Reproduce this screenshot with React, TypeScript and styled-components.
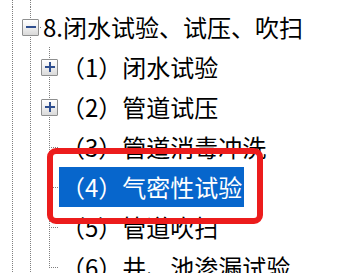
import React from "react";
import styled, { createGlobalStyle, css } from "styled-components";

const Global = createGlobalStyle`
  html, body { margin: 0; padding: 0; background: #ffffff; }
  body { width: 349px; height: 273px; overflow: hidden; }
`;

const DOT = "#7f7f7f";
const vDots = `repeating-linear-gradient(to bottom, ${DOT} 0 1px, transparent 1px 2px)`;
const hDots = `repeating-linear-gradient(to right, ${DOT} 0 1px, transparent 1px 2px)`;

type LineKind = "none" | "pass" | "tee" | "end";

const Tree = styled.div`
  position: relative;
  display: flex;
  flex-direction: column;
  font-family: "Noto Sans CJK SC", "Noto Sans", sans-serif;
  font-size: 24px;
  color: #000;
`;

const Row = styled.div<{ $h?: number }>`
  display: flex;
  align-items: stretch;
  height: ${(p) => p.$h ?? 40}px;
`;

const Guide = styled.div<{ $w: number; $x: number; $kind: LineKind }>`
  flex: none;
  width: ${(p) => p.$w}px;
  display: flex;
  align-items: center;
  background-repeat: no-repeat;
  ${(p) => {
    const x = p.$x;
    switch (p.$kind) {
      case "pass":
        return css`
          background-image: ${vDots};
          background-size: 1px 100%;
          background-position: ${x}px 0;
        `;
      case "tee":
        return css`
          background-image: ${vDots}, ${hDots};
          background-size: 1px 100%, ${p.$w - x}px 1px;
          background-position: ${x}px 0, ${x}px 50%;
        `;
      case "end":
        return css`
          background-image: ${vDots}, ${hDots};
          background-size: 1px 50%, ${p.$w - x}px 1px;
          background-position: ${x}px 0, ${x}px 50%;
        `;
      default:
        return css``;
    }
  }}
`;

const Toggle = styled.div<{ $size: number; $off: number }>`
  box-sizing: border-box;
  width: ${(p) => p.$size}px;
  height: ${(p) => p.$size}px;
  margin-left: ${(p) => p.$off}px;
  border: 1px solid #8e8f8f;
  border-radius: 1px;
  background: linear-gradient(to bottom, #ffffff 0%, #f1f1f1 45%, #d9d9d9 100%);
  display: flex;
  align-items: center;
  justify-content: center;
`;

const Label = styled.div<{ $selected?: boolean }>`
  display: flex;
  align-items: center;
  padding: 0 2px;
  white-space: nowrap;
  line-height: 40px;
  background: ${(p) => (p.$selected ? "#0766cc" : "transparent")};
  color: ${(p) => (p.$selected ? "#ffffff" : "#000000")};
`;

const Highlight = styled.div`
  position: absolute;
  left: 47px;
  top: 148px;
  width: 216px;
  height: 76px;
  box-sizing: border-box;
  border: 6px solid #ec1c1c;
  border-radius: 9px;
  pointer-events: none;
`;

const Sign: React.FC<{ plus?: boolean }> = ({ plus }) => (
  <svg width="10" height="10" viewBox="0 0 10 10">
    <rect x="0" y="4" width="10" height="2" fill="#2f4f8f" />
    {plus && <rect x="4" y="0" width="2" height="10" fill="#2f4f8f" />}
  </svg>
);

type Child = { text: string; expandable?: boolean; selected?: boolean };

const children: Child[] = [
  { text: "（1）闭水试验", expandable: true },
  { text: "（2）管道试压", expandable: true },
  { text: "（3）管道消毒冲洗" },
  { text: "（4）气密性试验", selected: true },
  { text: "（5）管道吹扫" },
  { text: "（6）井、池渗漏试验" },
];

export default function App() {
  return (
    <>
      <Global />
      <Tree>
        <Row $h={7}>
          <Guide $w={21} $x={12} $kind="pass" />
          <Guide $w={19} $x={9} $kind="pass" />
        </Row>
        <Row>
          <Guide $w={21} $x={12} $kind="pass" />
          <Guide $w={20} $x={9} $kind="tee">
            <Toggle $size={17} $off={1}>
              <Sign />
            </Toggle>
          </Guide>
          <Label>8.闭水试验、试压、吹扫</Label>
        </Row>
        {children.map((c, i) => (
          <Row key={c.text}>
            <Guide $w={21} $x={12} $kind="pass" />
            <Guide $w={19} $x={9} $kind="pass" />
            <Guide $w={19} $x={9} $kind={i === children.length - 1 ? "end" : "tee"}>
              {c.expandable && (
                <Toggle $size={17} $off={1}>
                  <Sign plus />
                </Toggle>
              )}
            </Guide>
            <Label $selected={c.selected}>{c.text}</Label>
          </Row>
        ))}
        <Highlight />
      </Tree>
    </>
  );
}
